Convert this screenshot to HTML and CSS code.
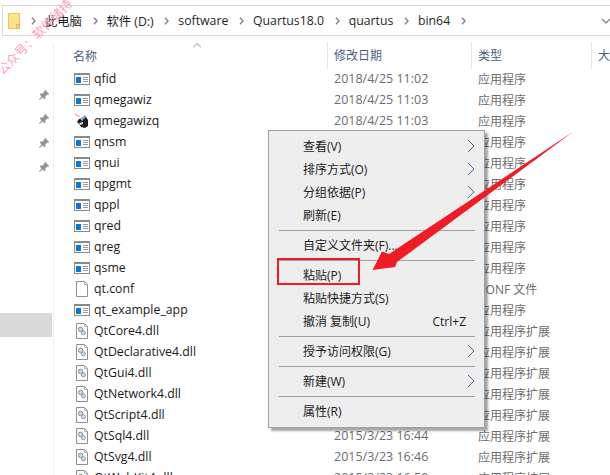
FILE: index.html
```html
<!DOCTYPE html>
<html lang="zh-CN">
<head>
<meta charset="utf-8">
<title>bin64</title>
<link rel="stylesheet" href="styles.css">
</head>
<body>
<svg class="defs" width="0" height="0">
  <symbol id="app" viewBox="0 0 16 12">
    <rect x="0.5" y="0.5" width="15" height="11" fill="#fff" stroke="#8a8a8a"/>
    <rect x="0" y="0" width="16" height="2" fill="#8a8a8a"/>
    <rect x="2" y="4" width="5" height="6" fill="#0a78d7"/>
    <path d="M9 4.500h5M9 6.500h5M9 8.500h5" stroke="#9a9a9a" fill="none"/>
  </symbol>
  <symbol id="doc" viewBox="0 0 12 16">
    <path d="M.5.500h8l3 3v12H.5z" fill="#fff" stroke="#8f8f8f"/>
    <path d="M8.500.500v3h3" fill="none" stroke="#b5b5b5"/>
  </symbol>
  <symbol id="dll" viewBox="0 0 12 16">
    <path d="M.5.500h8l3 3v12H.5z" fill="#fff" stroke="#8f8f8f"/>
    <path d="M8.500.500v3h3" fill="none" stroke="#b5b5b5"/>
    <circle cx="4.600" cy="6.400" r="2.200" fill="#d8d8d8" stroke="#8c8c8c"/>
    <circle cx="7.400" cy="9.800" r="2" fill="#cfe0f0" stroke="#8c98a6"/>
  </symbol>
  <symbol id="pin" viewBox="0 0 12 12">
    <path d="M7 .8l4.200 4.200-1 .7-.7-.2L7.200 7.800l.2 1.700-.9.8L4.600 8.400 1.600 11 1 10.400l2.600-3L1.700 5.500l.8-.9 1.700.2L6.400 2.500l-.1-.7z" fill="#8d959c"/>
  </symbol>
  <symbol id="sub" viewBox="0 0 8 14">
    <path d="M1 1l6 6-6 6" fill="none" stroke="#3f6d97" stroke-width="1"/>
  </symbol>
  <symbol id="crumb-chev" viewBox="0 0 5 8">
    <path d="M1 .8L4 4 1 7.200" fill="none" stroke="#8a8a8a" stroke-width="1.500"/>
  </symbol>
</svg>

<div class="window">
  <div class="addressbar">
    <svg class="folder" width="12" height="16" viewBox="0 0 12 16">
      <path d="M.5.500h11v15H.5z" fill="#fde28e" stroke="#e9c65a"/>
      <path d="M8.500 15.500v-4h3v4z" fill="#f7d676" stroke="#e3bd4c"/>
    </svg>
    <svg class="chev"><use href="#crumb-chev"/></svg><span class="crumb">此电脑</span>
    <svg class="chev"><use href="#crumb-chev"/></svg><span class="crumb">软件 (D:)</span>
    <svg class="chev"><use href="#crumb-chev"/></svg><span class="crumb">software</span>
    <svg class="chev"><use href="#crumb-chev"/></svg><span class="crumb">Quartus18.0</span>
    <svg class="chev"><use href="#crumb-chev"/></svg><span class="crumb">quartus</span>
    <svg class="chev"><use href="#crumb-chev"/></svg><span class="crumb">bin64</span>
    <svg class="chev"><use href="#crumb-chev"/></svg>
    <svg class="dropdown" width="8" height="6" viewBox="0 0 8 6"><path d="M0 1l4 4 4-4" fill="none" stroke="#777" stroke-width="1.200"/></svg>
  </div>

  <div class="body">
    <aside class="nav">
      <div class="pins">
        <svg class="pin"><use href="#pin"/></svg>
        <svg class="pin"><use href="#pin"/></svg>
        <svg class="pin"><use href="#pin"/></svg>
        <svg class="pin"><use href="#pin"/></svg>
      </div>
      <div class="nav-selected"></div>
    </aside>

    <main class="list">
      <svg class="sort" width="8" height="5" viewBox="0 0 8 5"><path d="M0 4.500l4-4 4 4" fill="none" stroke="#8a8a8a"/></svg>
      <div class="row head">
        <span class="c-name">名称</span><span class="c-date">修改日期</span><span class="c-type">类型</span><span class="c-size">大</span>
      </div>
      <div class="row"><span class="c-name"><svg class="ic-app"><use href="#app"/></svg>qfid</span><span class="c-date">2018/4/25 11:02</span><span class="c-type">应用程序</span></div>
      <div class="row"><span class="c-name"><svg class="ic-app"><use href="#app"/></svg>qmegawiz</span><span class="c-date">2018/4/25 11:03</span><span class="c-type">应用程序</span></div>
      <div class="row"><span class="c-name"><svg class="ic-q" viewBox="0 0 16 16"><path d="M1 1l5 2.500" stroke="#e58b8b" fill="none"/><path d="M3 9l2-3 7-2 2 3v6l-3 2-4-1-2-3z" fill="#1c1c1c"/><path d="M6 6l5-4 1.500 1.500L8 8z" fill="#7fa8d0"/><path d="M5 10l4-1v2l-3 1z" fill="#ddd"/></svg>qmegawizq</span><span class="c-date">2018/4/25 11:03</span><span class="c-type">应用程序</span></div>
      <div class="row"><span class="c-name"><svg class="ic-app"><use href="#app"/></svg>qnsm</span><span class="c-date">2018/4/25 11:03</span><span class="c-type">应用程序</span></div>
      <div class="row"><span class="c-name"><svg class="ic-app"><use href="#app"/></svg>qnui</span><span class="c-date">2018/4/25 11:03</span><span class="c-type">应用程序</span></div>
      <div class="row"><span class="c-name"><svg class="ic-app"><use href="#app"/></svg>qpgmt</span><span class="c-date">2018/4/25 11:03</span><span class="c-type">应用程序</span></div>
      <div class="row"><span class="c-name"><svg class="ic-app"><use href="#app"/></svg>qppl</span><span class="c-date">2018/4/25 11:03</span><span class="c-type">应用程序</span></div>
      <div class="row"><span class="c-name"><svg class="ic-app"><use href="#app"/></svg>qred</span><span class="c-date">2018/4/25 11:03</span><span class="c-type">应用程序</span></div>
      <div class="row"><span class="c-name"><svg class="ic-app"><use href="#app"/></svg>qreg</span><span class="c-date">2018/4/25 11:03</span><span class="c-type">应用程序</span></div>
      <div class="row"><span class="c-name"><svg class="ic-app"><use href="#app"/></svg>qsme</span><span class="c-date">2018/4/25 11:03</span><span class="c-type">应用程序</span></div>
      <div class="row"><span class="c-name"><svg class="ic-doc"><use href="#doc"/></svg>qt.conf</span><span class="c-date">2018/4/25 11:03</span><span class="c-type">CONF 文件</span></div>
      <div class="row"><span class="c-name"><svg class="ic-app"><use href="#app"/></svg>qt_example_app</span><span class="c-date">2018/4/25 11:03</span><span class="c-type">应用程序</span></div>
      <div class="row"><span class="c-name"><svg class="ic-doc"><use href="#dll"/></svg>QtCore4.dll</span><span class="c-date">2015/3/23 16:40</span><span class="c-type">应用程序扩展</span></div>
      <div class="row"><span class="c-name"><svg class="ic-doc"><use href="#dll"/></svg>QtDeclarative4.dll</span><span class="c-date">2015/3/23 16:40</span><span class="c-type">应用程序扩展</span></div>
      <div class="row"><span class="c-name"><svg class="ic-doc"><use href="#dll"/></svg>QtGui4.dll</span><span class="c-date">2015/3/23 16:42</span><span class="c-type">应用程序扩展</span></div>
      <div class="row"><span class="c-name"><svg class="ic-doc"><use href="#dll"/></svg>QtNetwork4.dll</span><span class="c-date">2015/3/23 16:43</span><span class="c-type">应用程序扩展</span></div>
      <div class="row"><span class="c-name"><svg class="ic-doc"><use href="#dll"/></svg>QtScript4.dll</span><span class="c-date">2015/3/23 16:43</span><span class="c-type">应用程序扩展</span></div>
      <div class="row"><span class="c-name"><svg class="ic-doc"><use href="#dll"/></svg>QtSql4.dll</span><span class="c-date">2015/3/23 16:44</span><span class="c-type">应用程序扩展</span></div>
      <div class="row"><span class="c-name"><svg class="ic-doc"><use href="#dll"/></svg>QtSvg4.dll</span><span class="c-date">2015/3/23 16:46</span><span class="c-type">应用程序扩展</span></div>
      <div class="row"><span class="c-name"><svg class="ic-doc"><use href="#dll"/></svg>QtWebKit4.dll</span><span class="c-date">2015/3/23 16:50</span><span class="c-type">应用程序扩展</span></div>
    </main>
  </div>

  <div class="menu">
    <div class="mi">查看(V)<svg class="sub"><use href="#sub"/></svg></div>
    <div class="mi">排序方式(O)<svg class="sub"><use href="#sub"/></svg></div>
    <div class="mi">分组依据(P)<svg class="sub"><use href="#sub"/></svg></div>
    <div class="mi">刷新(E)</div>
    <div class="sep"></div>
    <div class="mi">自定义文件夹(F)...</div>
    <div class="sep"></div>
    <div class="mi">粘贴(P)</div>
    <div class="mi">粘贴快捷方式(S)</div>
    <div class="mi">撤消 复制(U)<span class="key">Ctrl+Z</span></div>
    <div class="sep"></div>
    <div class="mi">授予访问权限(G)<svg class="sub"><use href="#sub"/></svg></div>
    <div class="sep"></div>
    <div class="mi">新建(W)<svg class="sub"><use href="#sub"/></svg></div>
    <div class="sep"></div>
    <div class="mi">属性(R)</div>
  </div>

  <div class="callout"></div>
  <svg class="arrow" width="610" height="475" viewBox="0 0 610 475">
    <path d="M573.500 131.500L389 254 382 251.500 372.500 270 395 267 397 262z" fill="#ee1c25"/>
  </svg>
  <div class="watermark">公众号：软件储持</div>
</div>
</body>
</html>
```

FILE: styles.css
```css
html, body {
  margin: 0;
  padding: 0;
  overflow: hidden;
  background: #fff;
}
.defs { position: absolute; }
.window {
  position: relative;
  width: 610px;
  height: 475px;
  overflow: hidden;
  background: #fff;
  font-family: "Open Sans", "Noto Sans CJK SC", sans-serif;
  font-size: 12px;
  color: #1a1a1a;
}
.addressbar {
  display: flex;
  align-items: center;
  box-sizing: border-box;
  height: 31px;
  margin: 5px 0 0 2px;
  padding-left: 5px;
  border: solid #d9d9d9;
  border-width: 1px 0 1px 1px;
  font-size: 12.300px;
  color: #1f1f1f;
}
.folder { flex: none; margin-right: 11px; }
.chev { flex: none; width: 5px; height: 8px; margin-right: 9px; }
.crumb { margin-right: 10.600px; white-space: nowrap; }
.dropdown { flex: none; margin-left: auto; }
.body {
  display: flex;
  height: 439px;
}
.nav {
  flex: none;
  width: 54px;
  box-sizing: border-box;
  border-right: 1px solid #f0f0f0;
  margin-top: 7px;
  display: flex;
  flex-direction: column;
}
.pins {
  display: flex;
  flex-direction: column;
  align-items: flex-end;
  gap: 12px;
  padding: 46px 3px 0 0;
}
.pin { width: 12px; height: 12px; display: block; }
.nav-selected {
  margin-top: 140px;
  width: 52px;
  height: 24px;
  background: #d9d9d9;
}
.list { flex: 1; min-width: 0; position: relative; padding: 7px 0 0 18px; }
.sort { position: absolute; left: 139px; top: 7px; }
.row {
  display: flex;
  align-items: center;
  height: 21px;
  white-space: nowrap;
}
.row.head {
  height: 25px;
  color: #4c607a;
}
.c-name { display: flex; align-items: center; width: 262px; flex: none; font-size: 12.300px; }
.c-date { width: 144px; flex: none; color: #6d6d6d; font-size: 12.500px; }
.c-type { width: 120px; flex: none; color: #6d6d6d; }
.c-size { flex: none; }
.head .c-name { width: 255px; padding-left: 1px; box-sizing: border-box; font-size: 12px; }
.head .c-date, .head .c-type, .head .c-size { color: #4c607a; font-size: 12px; }
.ic-app { width: 16px; height: 12px; margin: 0 4px 0 2px; flex: none; }
.ic-q { width: 16px; height: 16px; margin: 0 4px 0 2px; flex: none; }
.ic-doc { width: 12px; height: 16px; margin: 0 6px 0 4px; flex: none; }
.head span + span { border-left: 1px solid #e5e5e5; box-sizing: border-box; padding-left: 6px; height: 27px; line-height: 27px; }
.menu {
  position: absolute;
  left: 268px;
  top: 130px;
  width: 217px;
  height: 298px;
  box-sizing: border-box;
  padding: 4px 10px 4px 0;
  background: #eeeeee;
  border: 1px solid #a0a0a0;
  box-shadow: 3px 3px 2px rgba(0,0,0,.35);
  color: #1a1a1a;
}
.mi {
  position: relative;
  height: 23px;
  line-height: 23px;
  padding-left: 34px;
  white-space: nowrap;
}
.sep { height: 1px; margin: 3px 0 3px 10px; background: #a0a0a0; width: 196px; }
.sub { position: absolute; right: -1px; top: 4px; width: 8px; height: 14px; }
.key { position: absolute; right: 8px; top: 0; }
.callout {
  position: absolute;
  left: 277px;
  top: 258px;
  width: 83px;
  height: 27px;
  box-sizing: border-box;
  border: 2px solid #ee1c25;
}
.arrow { position: absolute; left: 0; top: 0; pointer-events: none; }
.watermark {
  position: absolute;
  left: -16px;
  top: 29px;
  width: 104px;
  transform: rotate(-45deg);
  color: #fb9bc6;
  font-size: 12.500px;
  white-space: nowrap;
  line-height: 13px;
}
```
